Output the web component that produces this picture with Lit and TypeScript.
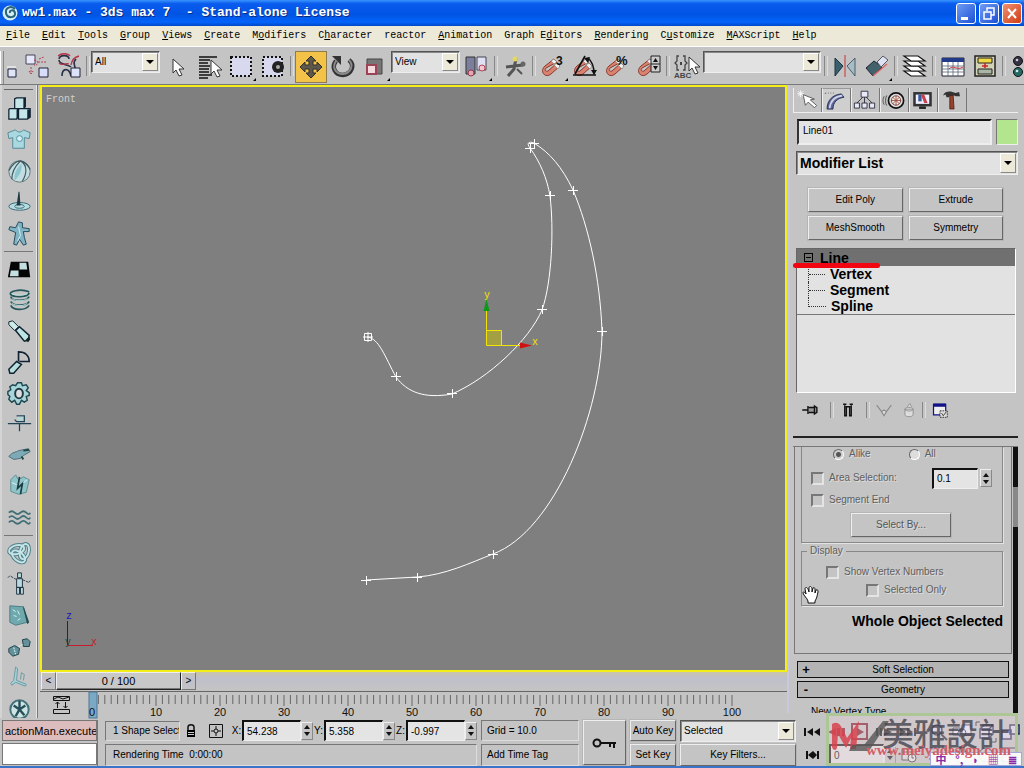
import { LitElement, html, svg, css, type TemplateResult } from "lit";
import { customElement } from "lit/decorators.js";
import { classMap } from "lit/directives/class-map.js";

const magnet = svg`
  <path d="M17 8 8 15c-6 5 0 13 6 8l9-8-3-3-9 8c-2 1-4-1-2-3l11-6z" fill="#d98270" stroke="#8b3a2f"/>
  <path d="m17 8 3 3-3 2-3-3zM23 15l-3-3-3 2 4 4z" fill="#eee" stroke="#777" stroke-width=".6"/>`;
const cursor = svg`<path d="M0 0v14l3-3 3 6 3-1-3-6h5z" fill="#fff" stroke="#333"/>`;
const flyout = svg`<path d="M31 27v3h-3z" fill="#000"/>`;

const toolIcons: Record<string, TemplateResult> = {
  "Select and Link": svg`<path d="M1 18h8v8H1z" fill="#dfe5f5" stroke="#222244"/><path d="M0 16h9" stroke="#fff"/>`,
  "Unlink Selection": svg`<path d="M5 4h9v9H5z" fill="#e6e8fa" stroke="#445"/><path d="M18 17h9v9h-9z" fill="#d7ddfa" stroke="#223"/><path d="M13 9c5 0 5 6 0 5M10 16v7m-2-3 2 3 2-3M17 11h9M18 8l5-2" fill="none" stroke="#b0405a" stroke-dasharray="2 1"/>`,
  "Bind to Space Warp": svg`<path d="M6 8c1-5 10-4 10 0M6 9c0 5 9 4 12 7M9 25c0-8 7-9 9 0M23 8c-4 4-1 5-1 9" fill="none" stroke="#293048" stroke-width="1.600"/><path d="M5 5c3-3 10-3 12 0M6 12c4 4 6-1 10 1M18 14c1-6 4-8 8-9" fill="none" stroke="#b43348" stroke-width="1.300"/><path d="M18 17h9v9h-9z" fill="#dce2fa" stroke="#223"/>`,
  "Select Object": svg`<g transform="translate(12 8)">${cursor}</g>`,
  "Select by Name": svg`<path d="M6 6h18M6 9h11M6 12h9M6 15h11M6 18h10M6 21h10M6 24h13M6 27h9" stroke="#111" stroke-width="1.400"/><g transform="translate(18 9)">${cursor}</g>`,
  "Selection Region": svg`<path d="M6 6h20v19H6z" fill="#d8d9ee" stroke="#111" stroke-width="2" stroke-dasharray="2 2"/>${flyout}`,
  "Window Crossing": svg`<path d="M6 6h19v19H6z" fill="#d8d9ee" stroke="#111" stroke-width="2" stroke-dasharray="2 2"/><circle cx="21" cy="16" r="6" fill="#222"/><circle cx="21" cy="16" r="2" fill="#aaa"/>`,
  "Select and Move": svg`<path d="m16 5 5 5h-3v4h4v-3l5 5-5 5v-3h-4v4h3l-5 5-5-5h3v-4h-4v3l-5-5 5-5v3h4v-4h-3z" fill="#5d574c" stroke="#332f28"/>`,
  "Select and Rotate": svg`<path d="M9 10c-5 6-1 14 7 14 9-1 12-10 6-15" fill="none" stroke="#333" stroke-width="4.500"/><path d="M9 10c-4 6-1 13 7 13 8-1 11-9 6-14" fill="none" stroke="#8a8a8a" stroke-width="2"/><path d="m5 5 9 0v9z" fill="#333"/>`,
  "Select and Scale": svg`<path d="M8 8h15v15H8z" fill="#777" stroke="#444"/><path d="M8 14h9v9H8z" fill="#f4dadf" stroke="#9a4455" stroke-width="2"/>${flyout}`,
  "Use Pivot Point Center": svg`<path d="M5 6h9v17H5z" fill="#7c7f9c" stroke="#333"/><path d="M16 6h9v13h-9z" fill="#dfe0f4" stroke="#445"/><circle cx="10" cy="22" r="3" fill="#e7a7b0" stroke="#963448"/><circle cx="21" cy="17" r="3" fill="#f4c7ce" stroke="#b34458"/>${flyout}`,
  "Select and Manipulate": svg`<path d="m7 16 17-2M17 7l-2 11-6 7" stroke="#555" stroke-width="3" fill="none"/><circle cx="16" cy="8" r="2.500" fill="#e3da5b"/><circle cx="24" cy="13" r="2.500" fill="#666"/><path d="m18 18 5 5" stroke="#555" stroke-width="2"/>`,
  "Snaps Toggle": svg`${magnet}<text x="19" y="14" font-size="12" font-weight="700" font-family="Liberation Sans, sans-serif" fill="#111">3</text>${flyout}`,
  "Angle Snap Toggle": svg`${magnet}<path d="M4 24h23M6 23 16 5M19 7c5 4 6 9 6 16" fill="none" stroke="#111" stroke-width="1.600"/><path d="m15 7 6-1-2 6zM22 19h6l-3 5z" fill="#111"/>`,
  "Percent Snap Toggle": svg`${magnet}<text x="15" y="14" font-size="13" font-weight="700" font-family="Liberation Sans, sans-serif" fill="#111">%</text>`,
  "Spinner Snap Toggle": svg`${magnet}<path d="M18 5h9v16h-9z" fill="#ccc" stroke="#222"/><path d="M18 13h9" stroke="#222"/><path d="m20 11 2.500-4 2.500 4zM20 15l2.500 4 2.500-4z" fill="#111"/>`,
  "Edit Named Selections": svg`<path d="M8 5H6v5l-2 2 2 2v5h2M12 5h2v5l2 2-2 2v5h-2" fill="none" stroke="#444" stroke-width="1.300"/><path d="M9 11h2v3H9z" fill="#444"/><text x="3" y="27" font-size="8" font-weight="700" font-family="Liberation Sans, sans-serif" fill="#444">ABC</text><g transform="translate(18 6)">${cursor}</g>`,
  "Mirror": svg`<path d="M6 7v18l8-10z" fill="#38606e" stroke="#1e3540"/><path d="M26 7v18l-8-10z" fill="#a9bcc6" stroke="#46606c"/><path d="M16 4v22" stroke="#c33"/>`,
  "Align": svg`<path d="m5 17 8-7 8 6-9 9z" fill="#43636c" stroke="#223"/><path d="m16 11 6-6 5 4-7 7z" fill="#dde2f0" stroke="#556"/><path d="m12 25 14-12" stroke="#d66" stroke-width="1.500"/>${flyout}`,
  "Layer Manager": svg`<g fill="#fff" stroke="#111" stroke-width="1.200"><path d="m5 20 14 0 7 5H12z"/><path d="m5 15 14 0 7 5H12z"/><path d="m5 10 14 0 7 5H12z"/><path d="m5 5 14 0 7 5H12z"/></g>`,
  "Curve Editor": svg`<path d="M5 7h22v18H5z" fill="#fff" stroke="#223"/><path d="M5 7h22v4H5z" fill="#223a8a"/><path d="M11 11v14M5 15h22M5 18h22M5 21h22M16 11v14M21 11v14" stroke="#567" stroke-width=".8"/><path d="M12 18c4-5 8 2 14-2" fill="none" stroke="#c33"/>`,
  "Schematic View": svg`<path d="M6 5h20v20H6z" fill="#d4d2b4" stroke="#222" stroke-width="1.500"/><path d="M9 7h14v5H9z" fill="#f0d944" stroke="#222"/><path d="M9 18h14v5H9z" fill="#a9b5a5" stroke="#222"/><path d="M16 12v5M13 15h6" stroke="#c22" stroke-width="1.500"/>`,
  "Material Editor": svg`<circle cx="11" cy="10" r="4.500" fill="#334" stroke="#111"/><circle cx="11" cy="21" r="4.500" fill="#256a62" stroke="#111"/><circle cx="10" cy="9" r="1.300" fill="#ccd"/><circle cx="10" cy="20" r="1.300" fill="#cee"/>`,
};

const railIcons: Record<string, TemplateResult> = {
  "Rigid Body Collection": svg`<g fill="#c4e6e8" stroke="#123" stroke-width="1.300"><path d="m11 5 2-1h9v9l-2 2h-9z"/><path d="M5 16l1-1h8v9l-1 2H5zM15 16l1-1h11v9l-3 2h-9z"/></g><path d="M20 4h2v10h-2zM24 16h3v8l-3 2zM13 16h2v9h-2z" fill="#123"/>`,
  "Cloth Collection": svg`<path d="m4 8 8-3c2 3 6 3 8 0l7 3-1 6-5-1v11H9V13l-4 1z" fill="#a9d8e0" stroke="#548a96"/><circle cx="16" cy="14" r="3" fill="#d9f0f3" stroke="#4c90a4"/>`,
  "Soft Body Collection": svg`<circle cx="16" cy="16" r="11" fill="#c3dde0" stroke="#64777a"/><path d="M17 5C10 12 8 19 8 24M17 5c8 5 6 14 2 21M5 15C9 8 13 5 17 5c5 1 8 5 10 9" fill="none" stroke="#3c5a60" stroke-width="1.300"/><path d="M18 8c-5 5-8 10-7 17 5-4 8-11 7-17z" fill="#8ec6d0"/>`,
  "Rope Collection": svg`<ellipse cx="16" cy="20" rx="11" ry="4" fill="#b6dbe0" stroke="#3c6a74"/><ellipse cx="16" cy="20" rx="5" ry="2" fill="none" stroke="#3c6a74"/><path d="M15 5h1l1 14h-4z" fill="#1f3a44"/>`,
  "Deforming Mesh": svg`<path d="m14 6 1-2 4 1v5l7 1v3l-6 0 1 6 2 7-3 1-4-6-3 6-3-1 2-12-7-3 1-3 6 1z" fill="#7fb4c4" stroke="#25485a"/><path d="m15 9 2 9-3 6" stroke="#d5eff3" fill="none"/>`,
  "Plane": svg`<path d="M7 8h18l2 16H4z" fill="#050505"/><path d="M16 9h7l1 7h-8zM7 17h8v6H6z" fill="#c4dfe0"/>`,
  "Spring": svg`<g fill="none" stroke="#24565c" stroke-width="1.700"><path d="M26 7C16 3 4 7 7 10s18 3 19-2M26 12C23 17 8 17 7 12M26 17c-3 5-17 5-19 0M26 21c-4 6-17 5-19 0"/></g><path d="M8 9c5 2 12 2 16 0M8 14c5 3 12 3 16 0M8 19c5 3 12 3 16 0" fill="none" stroke="#b9e0df"/>`,
  "Linear Dashpot": svg`<path d="m5 6 4-1 6 6-4 4-6-6z" fill="#cdebe6" stroke="#123"/><path d="m12 15 4-4 10 9-1 5-4 1z" fill="#bde5e2" stroke="#123" stroke-width="1.500"/><path d="m22 25 4-4 1 3-2 3z" fill="#122"/>`,
  "Angular Dashpot": svg`<path d="m5 23 8-8 5 3-8 9-4 0z" fill="#b7dfdb" stroke="#123" stroke-width="1.500"/><path d="M15 15V5c7 0 11 4 11 10H16" fill="none" stroke="#123" stroke-width="1.700"/>`,
  "Motor": svg`<path d="m14 5 4 0 1 3 4-1 2 3-2 3 3 2v3l-3 1 1 4-3 2-3-2-2 4h-3l-2-4-3 2-3-3 1-3-2-2v-3l3-2-1-3 3-2 3 1z" fill="#a8d5da" stroke="#1e4850" stroke-width="1.500"/><ellipse cx="15.500" cy="16" rx="4" ry="5" fill="#ddd" stroke="#1e3840" stroke-width="2"/>`,
  "Wind": svg`<path d="M13 7h8v6h-8l-2-2M4 15h24M16 15v8" fill="none" stroke="#245" stroke-width="1.300"/><path d="m14 8 6 0-1 4h-5z" fill="#b3d7d7"/>`,
  "Toy Car": svg`<path d="M5 17c4-5 7-4 10-6l10-2 2 3-7 4-3 3-7 1z" fill="#7eaab5" stroke="#4a707a"/><path d="m18 17 2 3M20 11l6-1" stroke="#244" stroke-width="2"/>`,
  "Fracture": svg`<path d="m7 9 5-5 3 5 5-3 6 3-3 13-8 2-8-3z" fill="#8fc4c8" stroke="#5d8f95"/><path d="m16 6-2 12 5-5-2 11" fill="none" stroke="#1b3c42" stroke-width="1.700"/><path d="m8 12 5 2M20 12l4-3" stroke="#def"/>`,
  "Water": svg`<g fill="none" stroke="#3e6e73" stroke-width="1.800"><path d="M5 11q3-3 6 0t6 0 6 0 4 0M5 16q3-3 6 0t6 0 6 0 4 0M5 21q3-3 6 0t6 0 6 0 4 0"/></g>`,
  "Constraint Solver": svg`<g fill="none" stroke="#4f8089" stroke-width="4"><ellipse cx="13" cy="12" rx="8" ry="4.500" transform="rotate(-15 13 12)"/><ellipse cx="21" cy="14" rx="4.500" ry="8" transform="rotate(15 21 14)"/><ellipse cx="15" cy="19" rx="4.500" ry="8" transform="rotate(-50 15 19)"/></g><g fill="none" stroke="#c4e4e7" stroke-width="2"><ellipse cx="13" cy="12" rx="8" ry="4.500" transform="rotate(-15 13 12)"/><ellipse cx="21" cy="14" rx="4.500" ry="8" transform="rotate(15 21 14)"/><ellipse cx="15" cy="19" rx="4.500" ry="8" transform="rotate(-50 15 19)"/></g>`,
  "Ragdoll": svg`<path d="M14 4h4v5h-4zM13 10h6v9h-6zM13 19h3v7h-3zM17 19h3v7h-3z" fill="#b9d9da" stroke="#234"/><path d="m13 11-7-4-2 2M19 11l7 3 1-2" fill="none" stroke="#345" stroke-dasharray="3 1"/>`,
  "Hinge": svg`<path d="m6 6 14 1 4 16-12 3-6-3z" fill="#6fa9ae" stroke="#4c7d84"/><path d="m20 6 6 17-2 2-4-16z" fill="#264a52"/><path d="m9 10 3 2M10 16l3 1M14 11l2 4M14 21l3-2" stroke="#d7f0f0"/>`,
  "Point-Point": svg`<path d="m5 18 6-3 5 3-1 6-6 2-4-4zM19 9l5-1 3 3-1 5-6 0z" fill="#64919a" stroke="#1f4048"/><path d="m15 16 4-2M10 17l2 7" stroke="#dff" stroke-dasharray="2 1"/>`,
  "Prismatic": svg`<path d="m12 5 2 2-1 12 10 4-1 2-10-4-4 3-1-2 3-3z" fill="#a4d2da" stroke="#6b9aa3"/><path d="m17 18 1-7 3 2-1 6" fill="none" stroke="#6b9aa3"/>`,
  "Car Wheel": svg`<circle cx="16" cy="17" r="9.500" fill="#cde3e4" stroke="#447078" stroke-width="2"/><path d="m16 17-6-4M16 17l6-4M16 17l-4 7M16 17l5 6M16 17V8" stroke="#285058" stroke-width="2.500"/>`,
};

const tabIcons: Record<string, TemplateResult> = {
  Create: svg`<g transform="translate(12 9) rotate(-12)"><path d="M0 0v13l4-3 6 8 3-2-6-8h5z" fill="#fff" stroke="#555"/></g><path d="m9 4 0 8M5 8h8M6 5l6 6M12 5l-6 6" stroke="#fff"/>`,
  Modify: svg`<path d="M6 25c0-10 6-17 17-18l3 4C18 12 13 17 13 25z" fill="#5d6799" stroke="#1d2342"/><path d="M9 24c1-8 6-14 15-15" fill="none" stroke="#d1d6ee" stroke-width="2"/><path d="M4 6h12M4 6v3" stroke="#555" stroke-dasharray="1 2"/>`,
  Hierarchy: svg`<g fill="#e7e9f8" stroke="#223"><path d="M12 5h8v7h-8zM4 19h6v6H4zM13 19h6v6h-6zM22 19h6v6h-6z"/><path d="M16 12v7M14 12l-7 7M18 12l7 7" fill="none"/></g>`,
  Motion: svg`<circle cx="19" cy="16" r="9" fill="#ddd" stroke="#111" stroke-width="2"/><circle cx="19" cy="16" r="5.500" fill="#eed" stroke="#733"/><path d="M19 10v12M13 16h12M15 12l8 8M23 12l-8 8" stroke="#944"/><path d="M8 10c-2 4-2 9 0 12M5 11c-2 3-2 7 0 10" fill="none" stroke="#444"/>`,
  Display: svg`<path d="M5 6h22v17H5z" fill="#333"/><path d="M8 9h16v11H8z" fill="#f2f0ff"/><path d="M11 9v8h4V9z" fill="#335a9c"/><path d="m14 9 4 10h4l-4-10z" fill="#c9404c"/><path d="M12 23h8v3h-8z" fill="#222"/>`,
  Utilities: svg`<path d="M6 10c2-5 8-5 11-4l4 1 4-1 1 5-5 0-2-1-5 1-1 1-3 0-1-3z" fill="#333"/><path d="M14 10h4l1 16h-5z" fill="#96432d" stroke="#4d2016"/>`,
};

const stackIcons: Record<string, TemplateResult> = {
  "Pin Stack": svg`<path d="M4 16h7M11 11v10M12 13h7v6h-7M19 11v10l3-2v-6z" fill="#999" stroke="#111" stroke-width="1.700"/>`,
  "Show End Result": svg`<path d="M10 9h4M12 10v13h2V12M22 9h-4M20 10v13h-2V12M13 12h6" fill="none" stroke="#111" stroke-width="1.700"/>`,
  "Make Unique": svg`<path d="m7 10 6 8M25 10l-6 8M13 18l3 5 3-5-3-2z" fill="#ddd" stroke="#888" stroke-width="1.300"/>`,
  "Remove Modifier": svg`<path d="M11 15h10v7c-1 3-9 3-10 0zM11 15c0-3 10-3 10 0s-10 3-10 0M14 12l3-4 2 4" fill="#ddd" stroke="#888"/>`,
  "Configure Modifier Sets": svg`<path d="M8 9h15v13H8z" fill="#eee" stroke="#118" stroke-width="1.500"/><path d="M8 8h15v4H8z" fill="#118"/><path d="M16 17h9v8h-9z" fill="#ddd" stroke="#222" stroke-dasharray="2 1"/><path d="m18 20 2 3 4-5" fill="none" stroke="#222"/>`,
};

const playIcons: Record<string, TemplateResult> = {
  "Go to Start": svg`<path d="M4 8h2v8H4zM13 8v8l-6-4zM20 8v8l-6-4z"/>`,
  "Previous Frame": svg`<path d="M12 8v8l-8-4zM13 8h3v8h-3zM18 8h3v8h-3z" fill="#712"/>`,
  "Play Animation": svg`<path d="M4 4h15v15H4z" fill="none" stroke="#712" stroke-width="2"/><path d="m9 8 7 4-7 4z" fill="#712"/>`,
  "Next Frame": svg`<path d="m12 8 8 4-8 4zM4 8h2v8H4zM8 8h2v8H8z"/>`,
  "Go to End": svg`<path d="m4 8 6 4-6 4zM11 8l6 4-6 4zM18 8h2v8h-2z"/>`,
  "Key Mode Toggle": svg`<path d="M6 8h2v8H6zM13 8v8l-5-4zM13 8l4 4-4 4zM17 8h2v8h-2z"/>`,
  "Time Configuration": svg`<path d="M6 6h11v11H6zM6 9h11" fill="#ddd" stroke="#333"/><circle cx="16" cy="15" r="4" fill="#eee" stroke="#333"/><path d="M16 12v3h2" stroke="#333" fill="none"/>`,
  "Zoom": svg`<circle cx="11" cy="10" r="5" fill="#ddf" stroke="#223" stroke-width="1.500"/><path d="m15 14 6 6" stroke="#223" stroke-width="2"/>`,
  "Zoom All": svg`<path d="M3 8h7v7H3zM12 5h9v10h-9z" fill="#eef" stroke="#335"/><circle cx="12" cy="13" r="4" fill="none" stroke="#335"/>`,
  "Zoom Extents": svg`<path d="m6 9 4-4h9v9l-4 4H6zM6 9h9v9M15 9l4-4" fill="#dde" stroke="#225" stroke-width="1.500"/><path d="M2 6V2h4M18 22h4v-4" fill="none" stroke="#222"/>`,
  "Zoom Extents All": svg`<path d="M4 10h9v9H4zM12 5h9v9h-9z" fill="#dde" stroke="#225" stroke-width="1.500"/>`,
  "Region Zoom": svg`<path d="M4 5h15v13H4z" fill="none" stroke="#224" stroke-dasharray="2 2"/>`,
  "Pan": svg`<path d="M8 19v-8l-3-2 5 1V4l2 5 2-5v6l3-3v9l-3 4z" fill="#eee" stroke="#222"/>`,
  "Arc Rotate": svg`<circle cx="12" cy="12" r="7" fill="none" stroke="#224"/>`,
  "Min/Max Toggle": svg`<path d="M4 5h15v14H4zM4 12h8v7" fill="none" stroke="#224"/>`,
};

const vertices: [number, number][] = [
  [534, 143], [530, 148], [550, 195], [542, 309], [452, 393], [396, 376],
  [573, 190], [602, 331], [493, 554], [417, 577], [366, 580],
];

const menus: [string, string, string][] = [
  ["", "F", "ile"], ["", "E", "dit"], ["", "T", "ools"], ["", "G", "roup"], ["", "V", "iews"],
  ["", "C", "reate"], ["M", "o", "difiers"], ["C", "h", "aracter"], ["reactor", "", ""],
  ["", "A", "nimation"], ["Graph E", "d", "itors"], ["", "R", "endering"],
  ["C", "u", "stomize"], ["", "M", "AXScript"], ["", "H", "elp"],
];

@customElement("app-root")
export class AppRoot extends LitElement {
  static styles = css`
    :host { display: block; height: 100vh; min-height: 600px; position: relative; overflow: hidden;
      background: #c4c4c4; color: #000; font: 10px/14px "Liberation Sans", Arial, sans-serif; }
    * { box-sizing: border-box; }
    button, input, select { font: inherit; color: inherit; margin: 0; padding: 0; border: 0; border-radius: 0;
      background: none; appearance: none; outline: 0; min-width: 0; }
    svg { display: block; }
    .app { height: 100%; display: flex; flex-direction: column; }
    .title { height: 26px; flex: none; display: flex; align-items: center; gap: 4px; padding: 0 2px;
      background: linear-gradient(#3a94ff, #0a5cee 14%, #0054e3 55%, #0464fb 85%, #0048c8); color: #fff; }
    .title h1 { margin: 0; flex: 1; font: bold 13px/26px "Liberation Mono", monospace; white-space: pre; text-shadow: 1px 1px #0a2a80; }
    .win { display: flex; gap: 3px; }
    .win button { width: 20px; height: 21px; border: 1px solid #fff; border-radius: 3px; background: linear-gradient(135deg, #6f9cf4, #1c50d4); }
    .win .close { background: linear-gradient(135deg, #f09070, #d03c14); }
    .menu { height: 20px; flex: none; display: flex; gap: 12px; padding-left: 6px; background: #ece9d8; overflow: hidden; }
    .menu button { font: 10px/20px "Liberation Mono", monospace; white-space: pre; flex: none; }
    .tools { height: 39px; flex: none; display: flex; padding-top: 4px; border-top: 1px solid #fff; border-bottom: 1px solid #777; overflow: hidden; }
    .tools button { width: 32px; height: 32px; flex: none; overflow: hidden; }
    .tools .cut { width: 14px; }
    .tools .on { background: #f2c249; border: 1px solid #8d7c4c; }
    .tools .on svg { margin: -1px; }
    .grip { width: 4px; flex: none; border-left: 1px solid #fff; border-right: 1px solid #888; margin-right: 3px; }
    .sep { width: 6px; flex: none; display: flex; justify-content: center; padding: 5px 0 8px; }
    .sep::before { content: ""; width: 2px; border-left: 1px solid #888; border-right: 1px solid #ddd; }
    .combo { display: grid; background: #e2e2e2; border: 1px solid; border-color: #555 #eee #eee #555; box-shadow: inset 1px 1px #888; height: 22px; }
    .combo select { grid-area: 1 / 1; width: 100%; padding: 0 18px 0 3px; }
    .arrow { grid-area: 1 / 1; justify-self: end; width: 16px; margin: 1px; background: #ece9d8; border: 1px solid; border-color: #fff #888 #888 #fff;
      pointer-events: none; display: grid; place-items: center; }
    .arrow::before { content: ""; border: 4px solid transparent; border-top-color: #000; border-bottom: 0; }
    .tools .combo { width: 69px; margin-right: 1px; flex: none; }
    .tools .wide { width: 118px; margin-right: 2px; }
    .main { flex: 1; min-height: 0; display: grid; grid-template-columns: 40px minmax(0, 1fr) 237px; }
    .rail { min-height: 0; overflow: hidden; margin-right: 2px; padding: 4px 4px 0 2px; border-right: 1px solid #777; border-left: 2px solid #d4d4d4; box-shadow: inset -1px 0 #e6e6e6; }
    .rail hr { margin: 2px 0; border: 0; border-top: 1px solid #777; }
    .rail hr.first { margin: 0 0 4px; border-color: #666; }
    .rail button { display: block; width: 31px; height: 31px; }
    .center { min-width: 0; min-height: 0; display: flex; flex-direction: column; }
    .view { flex: 1; min-height: 0; border: 2px solid #f4ee18; background: #7f7f7f; }
    .view svg { width: 100%; height: 100%; }
    .mono { font-family: "Liberation Mono", monospace; }
    .slider { height: 20px; flex: none; display: flex; align-items: stretch; padding: 0 0 1px 1px; border-bottom: 1px solid #666; background: linear-gradient(#c9c5a8, #bfbfcb 30%, #c4c4c4); }
    .slider button { width: 15px; border: 1px solid; border-color: #eee #777 #777 #eee; }
    .slider .thumb { width: 125px; border: 1px solid; border-color: #eee #222 #222 #eee; background: #c8c8c8; box-shadow: inset 0 -1px #777; font-size: 11px; }
    .track { height: 26px; flex: none; display: flex; }
    .track .curve { width: 52px; padding-left: 8px; flex: none; }
    .track .ticks { flex: 1; height: 26px; overflow: visible; margin-right: 55px; font-size: 11px; }
    .panel { min-height: 0; overflow: hidden; margin-bottom: 5px; display: flex; flex-direction: column; padding: 3px 6px 0 4px; border-left: 2px solid #c8c8e0; }
    .tabs { display: flex; flex: none; height: 25px; border-bottom: 1px solid #eee; }
    .tabs button { width: 29px; border-right: 1px solid #777; border-left: 1px solid #eee; overflow: hidden; }
    .tabs .on { background: #cfcfcf; border-top: 1px solid #999; }
    .tabs svg { margin-left: -1px; margin-top: -1px; }
    .name { display: flex; gap: 4px; margin: 6px 0 6px 4px; height: 26px; flex: none; }
    .name input { flex: 1; padding: 0 4px 2px; }
    .name button { width: 22px; background: #b3e58f; border: 1px solid; border-color: #777 #eee #eee #777; }
    .field { background: #e4e4e4; border: 2px solid; border-color: #111 #eee #eee #333; }
    .mod { margin-left: 3px; height: 24px; flex: none; font-size: 14px; font-weight: 700; }
    .btn { border: 1px solid; border-color: #eee #666 #666 #eee; background: #c4c4c4; box-shadow: 0 0 0 1px #b5b5b5; }
    .sets { display: grid; grid-template-columns: 1fr 1fr; gap: 4px 6px; flex: none; margin: 13px 15px 8px 15px; }
    .sets button { height: 24px; }
    .stack { position: relative; flex: none; height: 145px; margin: 0 2px 0 3px; border: 1px solid; border-color: #666 #fff #fff #666; background: #e2e2e2;
      font: bold 14px/16px "Liberation Sans", Arial, sans-serif; }
    .stack ul { margin: 0; padding: 0 0 0 11px; list-style: none; border-bottom: 1px solid #777; }
    .stack li { display: flex; border-left: 1px dotted #333; }
    .stack li:last-child { border-left: 0; }
    .stack li::before { content: ""; width: 16px; height: 8px; border-bottom: 1px dotted #333; margin-right: 5px; }
    .stack li:last-child::before { border-left: 1px dotted #333; width: 17px; }
    .head { background: #707070; height: 17px; display: flex; align-items: center; gap: 7px; padding-left: 7px; }
    .head button { width: 9px; height: 9px; border: 1px solid #000; display: grid; place-items: center; }
    .head button::before { content: ""; width: 5px; height: 1px; background: #000; }
    .mark { position: absolute; left: -4px; top: 14px; width: 87px; height: 5px; border-radius: 3px; background: #f00510; }
    .acts { display: flex; flex: none; height: 45px; padding: 0 0 9px 6px; border-bottom: 2px solid #222; }
    .acts button { width: 30px; display: grid; align-items: center; }
    .acts button.slim { width: 25px; }
    .acts .sep { padding: 9px 0; }
    .roll { flex: 1; min-height: 0; display: flex; margin-top: 8px; border-top: 1px solid #777; }
    .rollmain { flex: 1; min-width: 0; overflow: hidden; }
    .bar { width: 5px; background: linear-gradient(#111 40px, #888 40px 80px, #111 80px); }
    .box { height: 207px; border: 1px solid #777; border-top: 0; margin: 0 1px 7px 1px; padding: 0 8px 0 6px; position: relative; }
    .hand { position: absolute; left: 7px; top: 138px; }
    .dis { color: #606060; text-shadow: 1px 1px #ddd; }
    .group { border: 1px solid #888; border-top: 0; box-shadow: 1px 1px #e4e4e4; height: 96px; padding: 0 8px 0 9px; }
    .rowf { display: flex; align-items: center; height: 22px; }
    .rowf.radios { height: 14px; padding-left: 22px; gap: 38px; margin-bottom: 6px; }
    .rowf label, .chk { display: flex; align-items: center; gap: 5px; flex: 1; }
    .rowf.radios label { flex: none; }
    input[type="checkbox"] { width: 13px; height: 13px; border: 2px solid; border-color: #777 #e4e4e4 #e4e4e4 #777; }
    input[type="radio"] { width: 11px; height: 11px; border-radius: 50%; border: 1px solid; border-color: #666 #fff #fff #666; background: #ddd; }
    input[type="radio"]:checked { background: radial-gradient(#555 2px, #ccc 3px); }
    .num { width: 46px; height: 21px; padding-left: 3px; color: #000; background: #e4e4e4; border: 2px solid; border-color: #111 #eee #eee #111; border-right-width: 1px; border-bottom-width: 1px; }
    .spin { width: 12px; display: flex; flex-direction: column; justify-content: center; align-items: center; gap: 3px; border: 1px solid; border-color: #eee #888 #888 #eee; height: 18px; }
    .spin button { border: 3px solid transparent; }
    .spin .up { border-bottom: 4px solid #111; border-top: 0; }
    .spin .down { border-top: 4px solid #111; border-bottom: 0; }
    .rowf .spin { margin: 0 2px; }
    .by { display: block; width: 100px; height: 24px; margin: 2px 0 0 40px; color: #555; }
    fieldset { margin: 1px 0 0; padding: 5px 0 0 24px; border: 1px solid #888; height: 62px; min-width: 0; box-shadow: 1px 1px #e4e4e4; }
    legend { padding: 0 3px; margin-left: -19px; }
    fieldset .chk { height: 18px; }
    fieldset .chk.in { padding-left: 40px; }
    .whole { text-align: right; font: bold 14px/18px "Liberation Sans", Arial, sans-serif; margin: 6px 0 0; white-space: nowrap; }
    .rolled { display: grid; grid-template-columns: 16px 1fr 16px; width: calc(100% - 8px); margin: 0 4px 3px 4px; height: 17px; border: 1px solid #111; background: #b4b4b4; line-height: 15px; }
    .rolled b { font-size: 13px; }
    .next { margin: 7px 0 0 18px; }
    .status { flex: none; height: 50px; display: grid; grid-template-columns: 98px minmax(0, 1fr) 98px 43px 46px 116px 224px; gap: 4px; padding-top: 2px; border-bottom: 2px solid #3c74c8; overflow: hidden; }
    .two { display: grid; grid-template-rows: 21px 22px; gap: 3px; min-width: 0; }
    .listen { gap: 2px; border-right: 1px solid #777; padding-left: 2px; }
    .listen input { width: 100%; font-size: 11px; background: #fff; border: 1px solid #777; padding-left: 2px; }
    .listen input.pink { background: #dcbcbc; }
    .sunk { border: 1px solid; border-color: #777 #ddd #ddd #777; display: flex; align-items: center; padding-left: 5px; white-space: nowrap; overflow: hidden; }
    .wide2 .sunk { margin-left: 3px; padding-left: 7px; }
    .coords { display: flex; align-items: center; min-width: 0; }
    .coords .sunk { flex: 1; height: 20px; }
    .coords .lock { width: 22px; }
    .coords .abs { width: 29px; }
    .xyz { display: flex; align-items: center; }
    .xyz label { width: 11px; text-align: center; }
    .xyz .num { width: 59px; }
    .key { display: grid; place-items: center; height: 45px; }
    .play { display: grid; grid-template-columns: repeat(5, 24px) 6px repeat(4, 24px); grid-template-rows: 23px 23px; align-content: start; }
    .play button { height: 24px; overflow: hidden; }
    .play .time { grid-column: span 3; display: flex; align-items: center; padding-left: 5px; }
    .play .time input { flex: 1; }
    .play .time .spin button { height: 4px; }
    .over { position: absolute; right: 6px; bottom: 2px; width: 192px; height: 53px; border: 3px solid #acc695; background: rgba(226, 206, 212, .42); pointer-events: none; }
    .brand { position: absolute; left: 53px; top: 0; font: 500 32px/32px "Noto Sans CJK TC", sans-serif; color: rgba(65, 65, 75, .78); white-space: nowrap; }
    .logo { position: absolute; left: 2px; top: 0; }
    .site { position: absolute; left: 37px; top: 26px; font: bold 15px/16px "Liberation Serif", serif; color: #d45d66; white-space: nowrap; }
    .ime { position: absolute; right: -7px; bottom: -3px; width: 92px; height: 14px; display: flex; align-items: center; justify-content: space-around; border: 1px solid #a8a8d8;
      background: rgba(255, 255, 255, .9); color: #8a2ca8; font: bold 11px/12px "Noto Sans CJK SC", sans-serif; }
  `;

  private icon(shape: TemplateResult, size = 32, box = 32) {
    return html`<svg width=${size} height=${size} viewBox="0 0 ${box} ${box}" fill="#111" aria-hidden="true">${shape}</svg>`;
  }

  private tool(name: string, cls: Record<string, boolean> = {}) {
    return html`<button class=${classMap(cls)} aria-label=${name}>${this.icon(toolIcons[name])}</button>`;
  }

  private combo(label: string, value: string, cls = "") {
    return html`<div class="combo ${cls}"><select aria-label=${label}><option>${value}</option></select><span class="arrow"></span></div>`;
  }

  private spinner() {
    return html`<span class="spin"><button class="up" aria-label="Increase"></button><button class="down" aria-label="Decrease"></button></span>`;
  }

  private rail(names: string[]) {
    return names.map((n) => html`<button aria-label=${n}>${this.icon(railIcons[n], 31)}</button>`);
  }

  private play(name: string) {
    return html`<button aria-label=${name}>${this.icon(playIcons[name], 24, 24)}</button>`;
  }

  private toolbar() {
    const sep = html`<span class="sep"></span>`;
    const t = (...names: string[]) => names.map((n) => this.tool(n));
    return html`<div class="tools">
      <span class="grip"></span>${this.tool("Select and Link", { cut: true })}
      ${t("Unlink Selection", "Bind to Space Warp")}${sep}
      ${this.combo("Selection Filter", "All")}
      ${t("Select Object", "Select by Name", "Selection Region", "Window Crossing")}${sep}
      ${this.tool("Select and Move", { on: true })}${t("Select and Rotate", "Select and Scale")}
      ${this.combo("Reference Coordinate System", "View")}
      ${t("Use Pivot Point Center")}${sep}${t("Select and Manipulate")}${sep}
      ${t("Snaps Toggle", "Angle Snap Toggle", "Percent Snap Toggle", "Spinner Snap Toggle")}${sep}
      ${t("Edit Named Selections")}${this.combo("Named Selection Sets", "", "wide")}${sep}
      ${t("Mirror", "Align")}${sep}${t("Layer Manager")}${sep}${t("Curve Editor", "Schematic View")}${sep}
      ${t("Material Editor")}
    </div>`;
  }

  private viewport() {
    return html`<div class="view"><svg class="mono" viewBox="42 87 743 583" font-size="10">
      <text x="46" y="102" fill="#d0d0d0">Front</text>
      <g fill="none" stroke="#fff" stroke-width="1">
        <path d="M367 337C379 338 385 357 396 377C407 392 424 399 452 394C489 378 529 340 542 310C552 282 554 228 550 196C547 178 540 162 530 148C526 143 529 141 534 143C550 153 562 167 573 190C589 228 600 278 602 331C602 410 555 531 493 554C470 563 445 575 417 577L366 580"/>
        ${vertices.map(([x, y]) => svg`<path d="M${x - 5} ${y + 0.5}h10M${x + 0.5} ${y - 4}v9"/>`)}
        <path d="M364.500 333.500h7v7h-7zM368 332v10M363 337h10"/>
      </g>
      <path d="M486 331h15v14h-15z" fill="#a3a044"/>
      <path d="M486.500 310v35.500H520M486 330.500h15.500V345" fill="none" stroke="#f2e400"/>
      <path d="m486.500 299 3 12h-6z" fill="#0a9a18"/><path d="m532 345.500-12-3v6z" fill="#d01010"/>
      <text x="484" y="298" fill="#f2e400">y</text><text x="532" y="345" fill="#f2e400">x</text>
      <path d="M67.500 621v24" stroke="#1616b8"/><path d="M67 645.500h26" stroke="#c41c2c"/>
      <text x="66" y="619" fill="#1616b8">z</text><text x="91" y="645" fill="#c41c2c">x</text>
      <text x="65" y="645" fill="#204830">y</text>
    </svg></div>`;
  }

  private track() {
    const frames = Array.from({ length: 101 }, (_, i) => i);
    return html`<div class="track">
      <div class="curve"><svg width="28" height="26" fill="none" stroke="#111"><path d="M5.500 4.500h16v4h-16zM5.500 17.500h16v4h-16zM6 7l4-2 5 2 6-2M9.500 16v-6m-2 2 2-2 2 2M17.500 10v6m-2-2 2 2 2-2"/></svg></div>
      <svg class="ticks" aria-hidden="true">
        <rect x="-3" y="0" width="8" height="26" fill="#7ba8c4" stroke="#4c7896"/>
        ${frames.slice(1).map((f) => svg`<line x1="${f}%" x2="${f}%" y1="3" y2=${f % 10 ? 12 : 14} stroke="#666"/>`)}
        ${frames.filter((f) => f % 10 === 0).map((f) => svg`<text x="${f}%" y="24" text-anchor="middle" fill="#111">${f}</text>`)}
      </svg>
    </div>`;
  }

  private panel() {
    const sep = html`<span class="sep"></span>`;
    const a = (n: string, slim = false) => html`<button class=${classMap({ slim })} aria-label=${n}>${this.icon(stackIcons[n], 26)}</button>`;
    return html`<aside class="panel">
      <div class="tabs">${Object.keys(tabIcons).map((n) => html`<button class=${classMap({ on: n === "Modify" })} aria-label=${n}>${this.icon(tabIcons[n], 27)}</button>`)}</div>
      <div class="name"><input class="field" aria-label="Object name" .value=${"Line01"} /><button aria-label="Object color"></button></div>
      ${this.combo("Modifier List", "Modifier List", "mod")}
      <div class="sets">${["Edit Poly", "Extrude", "MeshSmooth", "Symmetry"].map((n) => html`<button class="btn">${n}</button>`)}</div>
      <div class="stack">
        <div class="head"><button aria-label="Collapse Line"></button>Line</div>
        <ul><li>Vertex</li><li>Segment</li><li>Spline</li></ul>
        <span class="mark"></span>
      </div>
      <div class="acts">${a("Pin Stack")}${sep}${a("Show End Result")}${sep}${a("Make Unique", true)}${a("Remove Modifier", true)}${sep}${a("Configure Modifier Sets")}</div>
      <div class="roll">
        <div class="rollmain">
          <div class="box">
            <div class="group dis">
              <div class="rowf radios"><label><input type="radio" name="h" checked disabled />Alike</label><label><input type="radio" name="h" disabled />All</label></div>
              <div class="rowf"><label><input type="checkbox" disabled />Area Selection:</label><input class="num" aria-label="Area" .value=${"0.1"} />${this.spinner()}</div>
              <div class="rowf"><label><input type="checkbox" disabled />Segment End</label></div>
              <button class="btn by dis" disabled>Select By...</button>
            </div>
            <fieldset class="dis"><legend>Display</legend>
              <label class="chk"><input type="checkbox" disabled />Show Vertex Numbers</label>
              <label class="chk in"><input type="checkbox" disabled />Selected Only</label>
            </fieldset>
            <p class="whole">Whole Object Selected</p>
            <svg class="hand" width="18" height="19" aria-hidden="true"><path d="M6 16c-1-3-4-5-5-8 0-2 2-1 3 1L3 4c0-2 2-2 3 0l1 3V3c0-2 2-2 3 0v4l1-4c1-1 2 0 2 1v4l1-3c2-1 2 1 2 2-1 4-1 6-3 9v2H6z" fill="#fff" stroke="#111"/></svg>
          </div>
          <button class="rolled"><b>+</b><span>Soft Selection</span></button>
          <button class="rolled"><b>-</b><span>Geometry</span></button>
          <div class="next">New Vertex Type</div>
        </div>
        <div class="bar"></div>
      </div>
    </aside>`;
  }

  private status() {
    const axis = (n: string, v: string) => html`<div class="xyz"><label for=${n}>${n}:</label><input id=${n} class="num" .value=${v} />${this.spinner()}</div>`;
    return html`<footer class="status">
      <div class="two listen"><input class="pink" aria-label="Macro recorder" .value=${"actionMan.execute"} /><input aria-label="Script listener" /></div>
      <div class="two wide2">
        <div class="coords"><div class="sunk">1 Shape Selected</div>
          <button class="lock" aria-label="Selection Lock"><svg width="22" height="20"><path d="M8 9V6c0-3 6-3 6 0v3" fill="none" stroke="#111" stroke-width="1.500"/><path d="M7 9h8v7H7z"/><path d="M8 11.500h6M8 13.500h6" stroke="#ccc"/></svg></button>
          <button class="abs" aria-label="Absolute Mode"><svg width="28" height="20" fill="none" stroke="#111"><path d="M7.500 3.500h13v13h-13z"/><circle cx="14" cy="10" r="2"/><path d="M14 5v3M14 12v3M9 10h3M16 10h3"/></svg></button>
          ${axis("X", "54.238")}${axis("Y", "5.358")}${axis("Z", "-0.997")}
        </div>
        <div class="sunk">Rendering Time&nbsp; 0:00:00</div>
      </div>
      <div class="two"><div class="sunk">Grid = 10.0</div><div class="sunk">Add Time Tag</div></div>
      <button class="btn key" aria-label="Set Keys"><svg width="28" height="14" fill="none" stroke="#111" stroke-width="2"><circle cx="6" cy="7" r="3.500"/><path d="M10 7h15M23 7v5M19 7v4"/></svg></button>
      <div class="two"><button class="btn">Auto Key</button><button class="btn">Set Key</button></div>
      <div class="two">${this.combo("Key mode set", "Selected")}<button class="btn">Key Filters...</button></div>
      <div class="play">
        ${["Go to Start", "Previous Frame", "Play Animation", "Next Frame", "Go to End"].map((n) => this.play(n))}<span></span>
        ${["Zoom", "Zoom All", "Zoom Extents", "Zoom Extents All"].map((n) => this.play(n))}
        ${this.play("Key Mode Toggle")}
        <div class="time"><input class="num" aria-label="Current frame" .value=${"0"} />${this.spinner()}</div>
        ${this.play("Time Configuration")}<span></span>
        ${["Region Zoom", "Pan", "Arc Rotate", "Min/Max Toggle"].map((n) => this.play(n))}
      </div>
    </footer>`;
  }

  render() {
    const r = Object.keys(railIcons);
    return html`<div class="app">
      <header class="title">
        <svg width="16" height="18" viewBox="0 0 16 18"><circle cx="8" cy="9" r="7.500" fill="#d5eef2"/><path d="M13 5C9 1 3 4 4 9c1 6 10 5 9 0-1-4-6-3-5 0" fill="none" stroke="#28647c" stroke-width="2"/></svg>
        <h1>ww1.max - 3ds max 7  - Stand-alone License</h1>
        <div class="win">
          <button aria-label="Minimize"><svg width="18" height="19"><path d="M4 13h7v3H4z" fill="#fff"/></svg></button>
          <button aria-label="Restore"><svg width="18" height="19" fill="none" stroke="#fff" stroke-width="1.500"><path d="M7 7V4h7v7h-3M4 8h7v7H4z"/></svg></button>
          <button class="close" aria-label="Close"><svg width="18" height="19"><path d="m5 5 8 9M13 5l-8 9" stroke="#fff" stroke-width="2"/></svg></button>
        </div>
      </header>
      <nav class="menu">${menus.map(([a, b, c]) => html`<button>${a}<u>${b}</u>${c}</button>`)}</nav>
      ${this.toolbar()}
      <div class="main">
        <nav class="rail"><hr class="first" />${this.rail(r.slice(0, 5))}<hr />${this.rail(r.slice(5, 14))}<hr />${this.rail(r.slice(14))}</nav>
        <section class="center">
          ${this.viewport()}
          <div class="slider"><button aria-label="Previous">&lt;</button><button class="thumb">0 / 100</button><button aria-label="Next">&gt;</button></div>
          ${this.track()}
        </section>
        ${this.panel()}
      </div>
      ${this.status()}
      <div class="over">
        <div class="ime"><span>中</span><span>°,</span><span>◗</span><span>▦</span><span>≣</span></div>
        <svg class="logo" width="60" height="46"><path d="M1 8c5-3 8-1 11 6l4 8L28 5l-3 28h-6l1-11-5 10-8-14-1 13c0 4-4 4-5 0z" fill="#d8434e" fill-opacity=".85"/><path d="M52 5h6L38 35H18l3-6h12z" fill="#555" fill-opacity=".8"/></svg>
        <span class="brand">美雅設計</span><span class="site">www.meiyadesign.com</span>
      </div>
    </div>`;
  }
}
